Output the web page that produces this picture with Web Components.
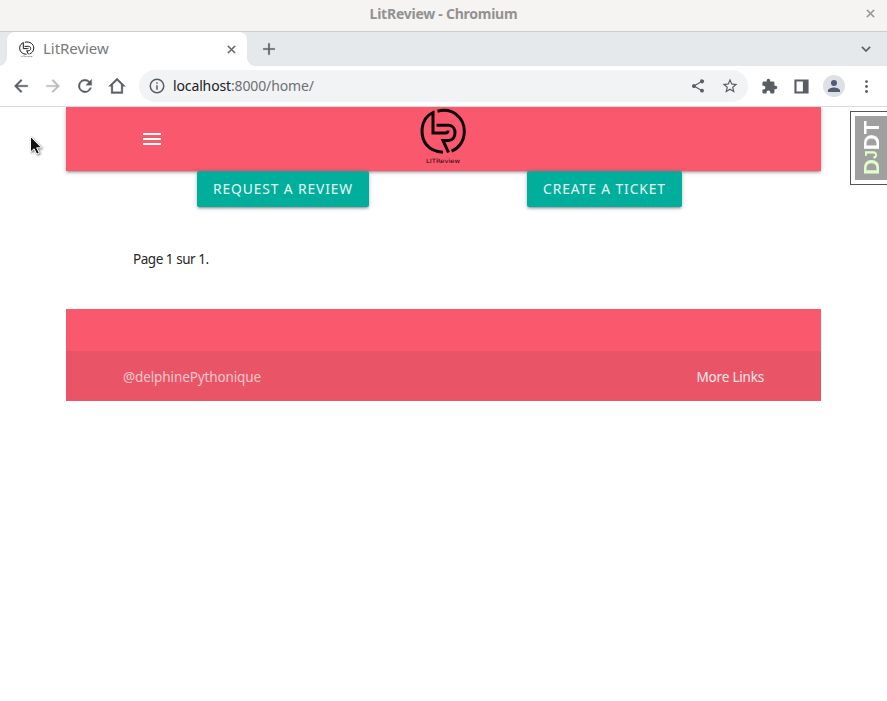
<!DOCTYPE html>
<html lang="fr"><head><meta charset="utf-8"><title>LitReview</title>
<style>html,body{margin:0;height:100%;background:#fff;font-family:"Noto Sans","Open Sans",sans-serif}body{overflow:hidden}</style></head>
<body>
<browser-window>
  <lit-nav></lit-nav>
  <lit-actions><lit-button style="--w:172px;--ls:.9px">REQUEST A REVIEW</lit-button><lit-button style="--w:155px;--ls:.92px">CREATE A TICKET</lit-button></lit-actions>
  <lit-pager>Page 1 sur 1.</lit-pager>
  <lit-footer><span slot="owner">@delphinePythonique</span><span slot="more">More Links</span></lit-footer>
  <debug-handle slot="overlay"></debug-handle>
  <mouse-pointer slot="overlay"></mouse-pointer>
</browser-window>
<script>
const define=(name,html)=>customElements.define(name,class extends HTMLElement{
  constructor(){super();this.attachShadow({mode:'open'}).innerHTML=html;}
});
define('lit-logo',`<style>:host{display:block;width:48px;height:58px}svg{display:block;width:100%;height:100%}text{font:400 6px "DejaVu Sans",sans-serif}</style>
<svg viewBox="0 0 48 58" preserveAspectRatio="none"><g fill="none" stroke="#0b0709" stroke-width="3">
<path d="M23 45.200C8 44.500 1 34 2.200 21.500C3 13.500 7.500 8 13 5.500V26H25.500Q28 26 28 23.500"/>
<path d="M17.500 4.200C33 .3 44.500 11 44.300 24.500C44.200 34.500 38.500 41.500 31.500 44.200"/>
<path d="M16.500 18.200H28.500C37.200 18.200 37.200 33.400 28.500 33.400H23L28.500 45.500"/></g>
<text x="6" y="55.500" textLength="34" lengthAdjust="spacingAndGlyphs" fill="#1b080c">LITReview</text></svg>`);
const icons={
 back:'<path d="M20 11H7.8l5.6-5.6L12 4l-8 8 8 8 1.4-1.4L7.8 13H20z" stroke="currentColor" stroke-width=".4"/>',
 forward:'<path d="M12 4l-1.400 1.400 5.600 5.600H4v2h12.200l-5.600 5.600L12 20l8-8z" stroke="currentColor" stroke-width=".4"/>',
 reload:'<path d="M17.65 6.350A8 8 0 1 0 19.730 14h-2.080A6 6 0 1 1 12 6c1.660 0 3.140.69 4.220 1.780L13 11h7V4z" stroke="currentColor" stroke-width=".4"/>',
 home:'<path d="M12 2.500L2 12.300H5V21h14v-8.700h3zM12 5.300l5 4.900V19H7v-8.800z" fill-rule="evenodd" stroke="currentColor" stroke-width=".4"/>',
 info:'<path d="M11 7h2v2h-2zm0 4h2v6h-2zM12 2a10 10 0 1 0 0 20 10 10 0 0 0 0-20zm0 18a8 8 0 1 1 0-16 8 8 0 0 1 0 16z"/>',
 close:'<path d="M19 6.400L17.600 5 12 10.600 6.400 5 5 6.400 10.600 12 5 17.600 6.400 19 12 13.400 17.600 19 19 17.600 13.400 12z" stroke="currentColor"/>',
 plus:'<path d="M19 13h-6v6h-2v-6H5v-2h6V5h2v6h6z" stroke="currentColor" stroke-width=".2"/>',
 chevron:'<path d="M7.400 8.600L12 13.200l4.600-4.600L18 10l-6 6-6-6z" stroke="currentColor" stroke-width=".5"/>',
 share:'<path d="M18 16.080c-.76 0-1.440.3-1.960.77L8.910 12.700a3 3 0 0 0 0-1.400l7.050-4.110A3 3 0 1 0 15 5c0 .24.040.47.090.7L8.040 9.810a3 3 0 1 0 0 4.380l7.120 4.160c-.05.21-.08.43-.08.650a2.920 2.920 0 1 0 2.920-2.920z"/>',
 star:'<path d="M22 9.240l-7.190-.62L12 2 9.190 8.630 2 9.240l5.460 4.730L5.820 21 12 17.270 18.180 21l-1.630-7.030zM12 15.400l-3.760 2.270 1-4.280-3.320-2.880 4.380-.38L12 6.100l1.710 4.040 4.380.38-3.320 2.880 1 4.280z"/>',
 puzzle:'<path d="M20.500 11H19V7a2 2 0 0 0-2-2h-4V3.500a2.500 2.500 0 0 0-5 0V5H4a2 2 0 0 0-2 2v3.800h1.500a2.700 2.700 0 0 1 0 5.400H2V20c0 1.100.9 2 2 2h3.800v-1.500a2.700 2.700 0 0 1 5.400 0V22H17a2 2 0 0 0 2-2v-4h1.500a2.500 2.500 0 0 0 0-5z"/>',
 panel:'<path d="M2 2h20v20H2zM5 5v14h9V5z" fill-rule="evenodd"/>',
 person:'<path d="M12 12a4 4 0 1 0 0-8 4 4 0 0 0 0 8zm0 2c-2.670 0-8 1.340-8 4v2h16v-2c0-2.660-5.330-4-8-4z"/>',
 more:'<circle cx="12" cy="5" r="2"/><circle cx="12" cy="12" r="2"/><circle cx="12" cy="19" r="2"/>',
 menu:'<path d="M3 18h18v-2H3zm0-5h18v-2H3zm0-7v2h18V6z"/>'};
customElements.define('line-icon',class extends HTMLElement{constructor(){super();this.attachShadow({mode:'open'})}
 connectedCallback(){const s=this.getAttribute('size')||18;this.shadowRoot.innerHTML=`<style>:host{display:block;flex:none;width:${s}px;height:${s}px}svg{display:block}</style><svg width="${s}" height="${s}" viewBox="0 0 24 24" fill="currentColor">${icons[this.getAttribute('name')]}</svg>`}});
define('title-bar',`<style>:host{display:grid;grid-template-columns:34px 1fr 34px;align-items:start;height:31px;background:#f5f4f2;border-bottom:1px solid #cfcdca;color:#929292}
b{grid-column:2;margin-top:4px;text-align:center;font-size:14px;line-height:20px;letter-spacing:-.25px}line-icon{justify-self:center;margin-top:7px}</style><b>LitReview - Chromium</b><line-icon name="close" size="13"></line-icon>`);
define('tab-strip',`<style>:host{display:flex;height:34px;background:#e5e9ec;align-items:flex-end;color:#5f6368}
.tab{box-sizing:border-box;display:flex;align-items:center;width:240px;height:34px;margin-left:7px;background:#fff;border-radius:8px 8px 0 0;padding:0 9px 0 12px;position:relative}
.tab:before,.tab:after{content:"";position:absolute;bottom:0;width:8px;height:8px}
.tab:before{left:-8px;background:radial-gradient(circle at 0 0,transparent 7.5px,#fff 8px)}.tab:after{right:-8px;background:radial-gradient(circle at 100% 0,transparent 7.5px,#fff 8px)}
lit-logo{width:16px;height:17px}.t{margin-left:8px;padding-bottom:2px;flex:1;font-size:15px;line-height:20px;color:#77797b;letter-spacing:-.04px}
.plus{margin:0 auto 7px 12px}.chev{margin:0 12px 8px 0}</style>
<div class="tab"><lit-logo></lit-logo><span class="t">LitReview</span><line-icon name="close" size="13"></line-icon></div><line-icon class="plus" name="plus" size="20"></line-icon><line-icon class="chev" name="chevron"></line-icon>`);
define('tool-bar',`<style>:host{display:flex;align-items:center;box-sizing:border-box;height:41px;padding:0 11px;background:#fff;border-bottom:1px solid #d8d9da;color:#5a5d63}
.nav{display:flex;gap:12px}.dim{color:#babcbe}.omni{box-sizing:border-box;display:flex;align-items:center;width:609px;height:32px;border-radius:16px;background:#f1f3f4;margin-left:12px;padding:0 9px}
.url{flex:1;margin-left:7px;font-size:14px;line-height:20px;color:#6d7074;letter-spacing:-.13px}.url i{font-style:normal;color:#202124}
.omni .star{margin-left:15px}.right{display:flex;align-items:center;margin-left:13px}.avatar{width:22px;height:22px;border-radius:50%;background:#dee0e6;display:grid;place-items:center;color:#525d72;margin:0 13px 0 13px}.panel{margin-left:15px}</style>
<div class="nav"><line-icon name="back" size="20"></line-icon><line-icon class="dim" name="forward" size="20"></line-icon><line-icon name="reload" size="20"></line-icon><line-icon name="home" size="20"></line-icon></div>
<div class="omni"><line-icon name="info"></line-icon><span class="url"><i>localhost</i>:8000/home/</span><line-icon name="share" size="16"></line-icon><line-icon class="star" name="star"></line-icon></div>
<div class="right"><line-icon name="puzzle" size="17"></line-icon><line-icon class="panel" name="panel" size="17"></line-icon><span class="avatar"><line-icon name="person" size="18"></line-icon></span><line-icon name="more" size="17"></line-icon></div>`);
define('browser-window',`<style>:host{display:flex;flex-direction:column;height:100%}main{flex:1;width:755px;margin-left:66px}</style><title-bar></title-bar><tab-strip></tab-strip><tool-bar></tool-bar><main><slot></slot></main><slot name="overlay"></slot>`);
define('lit-nav',`<style>:host{display:grid;grid-template-columns:1fr 48px 1fr;align-items:center;height:64px;background:#fa586c;color:#fff;box-shadow:0 2px 2px rgba(0,0,0,.14),0 3px 1px -2px rgba(0,0,0,.12),0 1px 5px rgba(0,0,0,.2);clip-path:inset(0 -8px -8px)}
.menu{margin-left:74px}lit-logo{align-self:start}</style><line-icon class="menu" name="menu" size="24"></line-icon><lit-logo></lit-logo>`);
define('lit-actions',`<style>:host{display:flex;gap:158px;padding-left:131px;position:relative}</style><slot></slot>`);
define('lit-button',`<style>:host{display:block;width:var(--w);height:36px;border-radius:2px;background:#00ae9b;color:#e8faf7;text-align:center;font-size:13.8px;line-height:36px;letter-spacing:var(--ls);white-space:nowrap;box-shadow:0 2px 2px rgba(0,0,0,.14),0 3px 1px -2px rgba(0,0,0,.12),0 1px 5px rgba(0,0,0,.2)}</style><slot></slot>`);
define('lit-pager',`<style>:host{display:block;margin:42px 0 39px;padding-left:67px;font-size:13.5px;line-height:21px;color:#272727;letter-spacing:-.46px}</style><slot></slot>`);
define('lit-footer',`<style>:host{display:block;padding-top:42px;background:#fa586c}.bar{display:flex;justify-content:space-between;align-items:center;height:50px;padding:2px 57px 0;box-sizing:border-box;background:#e95567;font-size:13.5px;letter-spacing:-.11px;color:#f7c6cc}.more{color:#fce9eb;letter-spacing:-.2px}</style><div class="bar"><slot name="owner"></slot><span class="more"><slot name="more"></slot></span></div>`);
define('debug-handle',`<style>:host{position:absolute;left:850px;top:111px;width:37px;height:74px;box-sizing:border-box;border:1px solid #555;border-right:0;background:#fff;padding:4px 0 4px 4px}
div{height:64px;background:#a0a0a0;display:flex;align-items:center;justify-content:center;writing-mode:vertical-rl;transform:rotate(180deg);font:700 22px/34px "Liberation Sans",sans-serif;color:#fff}b{color:#dfffc8}small{font-size:16px}</style><div><span><b>D<small>J</small></b>DT</span></div>`);
define('mouse-pointer',`<style>:host{position:absolute;left:28px;top:134px;filter:drop-shadow(1px 1px 1px #0008)}svg{display:block}</style><svg width="16" height="22"><path d="M2.500 2.500V18l3.600-3.200 2.700 5.500 2.500-1.300-2.600-5.200h4.900z" fill="#111" stroke="#fff"/></svg>`);
</script></body></html>
